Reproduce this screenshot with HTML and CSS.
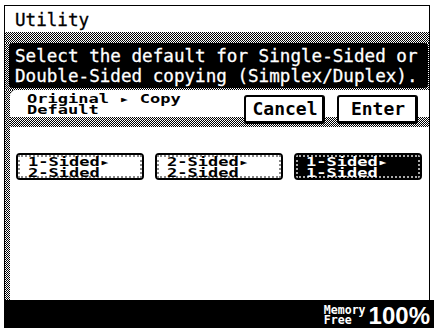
FILE: index.html
```html
<!DOCTYPE html>
<html>
<head>
<meta charset="utf-8">
<link rel="stylesheet" href="styles.css">
</head>
<body>
<div class="screen">
  <div class="title">Utility</div>
  <div class="band"></div>
  <div class="msgwrap">
    <div class="msg">Select the default for Single-Sided or<br>Double-Sided copying (Simplex/Duplex).</div>
  </div>
  <div class="body">
    <div class="panel">
      <div class="tabrow">
        <div class="tab"><span class="sq">Original ▸ Copy<br>Default</span></div>
        <div class="actions">
          <button class="cmd">Cancel</button>
          <button class="cmd">Enter</button>
        </div>
      </div>
      <div class="content">
        <div class="choices">
          <div class="choice"><div class="in"><span class="sq">1-Sided▸<br>2-Sided</span></div></div>
          <div class="choice"><div class="in"><span class="sq">2-Sided▸<br>2-Sided</span></div></div>
          <div class="choice selected"><div class="in"><span class="sq">1-Sided▸<br>1-Sided</span></div></div>
        </div>
      </div>
    </div>
  </div>
  <div class="status">
    <span class="mem">Memory<br>Free</span>
    <span class="pct">100%</span>
  </div>
</div>
</body>
</html>
```
FILE: styles.css
```css
* { box-sizing: border-box; }
html, body { margin: 0; padding: 0; background: #fff; }
body {
  width: 434px;
  height: 328px;
  overflow: hidden;
  font-family: "DejaVu Sans Mono", "Liberation Mono", monospace;
  color: #000;
}
.screen {
  margin: 5px 0 0 4px;
  width: 426px;
  height: 323px;
  border-top: 1px solid #000;
  border-left: 1px solid #000;
  border-right: 1px solid #000;
  display: flex;
  flex-direction: column;
}
.band, .msgwrap, .body {
  background: repeating-conic-gradient(#000 0 25%, #fff 0 50%) 0 0 / 2px 2px;
}
.title {
  height: 26px;
  padding: 4px 0 0 10px;
  font-size: 17.6px;
  line-height: 20px;
  background: #fff;
  -webkit-text-stroke: 0.3px #000;
}
.band { height: 11px; }
.msgwrap {
  height: 47px;
  padding: 0 1px 2px 4px;
}
.msg {
  height: 45px;
  background: #000;
  color: #fff;
  border-radius: 4px;
  padding: 3px 0 0 6px;
  font-size: 17.6px;
  line-height: 20px;
  white-space: nowrap;
  -webkit-text-stroke: 0.3px #fff;
}
.body {
  flex: 1;
  padding-left: 5px;
  display: flex;
}
.panel {
  flex: 1;
  display: flex;
  flex-direction: column;
  background: #fff;
  border-radius: 6px 0 0 0;
  overflow: hidden;
}
.tabrow {
  height: 37px;
  display: flex;
  justify-content: space-between;
  background:
    linear-gradient(#fff, #fff) top left / 100% 27px no-repeat,
    repeating-conic-gradient(#000 0 25%, #fff 0 50%) 0 0 / 2px 2px;
}
.tab {
  padding: 4px 0 0 17px;
}
.sq {
  display: inline-block;
  font-size: 11.5px;
  font-weight: bold;
  line-height: 10.5px;
  transform: scaleX(1.48);
  transform-origin: top left;
  white-space: nowrap;
}
.actions {
  display: flex;
  gap: 12px;
  padding: 5px 11px 0 0;
}
.cmd {
  width: 81px;
  height: 29px;
  margin: 0;
  padding: 0 0 0 2px;
  background: #fff;
  color: #000;
  border: 2px solid #000;
  border-right-width: 3px;
  border-bottom-width: 3px;
  border-radius: 3px;
  font-family: "DejaVu Sans Mono", "Liberation Mono", monospace;
  font-weight: bold;
  font-size: 18px;
  line-height: 22px;
}
.content {
  flex: 1;
  background: #fff;
  padding: 26px 0 0 6px;
}
.choices {
  display: flex;
  gap: 11px;
}
.choice {
  width: 128px;
  height: 27px;
  border: 2px solid #000;
  border-radius: 4px;
  background: #fff;
}
.choice .in {
  height: 100%;
  border: 2px dotted #888;
  border-radius: 2px;
  padding: 0 0 0 8px;
}
.choice.selected { background: #000; }
.choice.selected .in { border-color: #aaa; color: #fff; }
.status {
  height: 28px;
  margin: 0 -5px 0 -1px;
  background: #000;
  color: #fff;
  display: flex;
  justify-content: flex-end;
  align-items: center;
  padding-right: 4px;
}
.mem {
  font-size: 11.6px;
  font-weight: bold;
  line-height: 10px;
  margin-right: 3px;
  padding-top: 2px;
}
.pct {
  font-family: "Liberation Sans", Arial, sans-serif;
  font-weight: bold;
  font-size: 24px;
  line-height: 24px;
  padding-top: 4px;
}
```
